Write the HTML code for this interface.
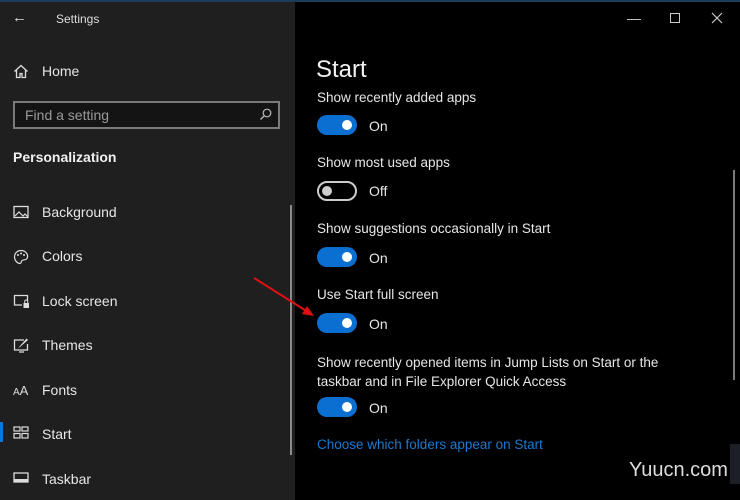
<!DOCTYPE html>
<html><head><meta charset="utf-8"><style>
*{margin:0;padding:0;box-sizing:border-box}
body{width:740px;height:500px;overflow:hidden;background:#000;font-family:"Liberation Sans",sans-serif;position:relative;color:#fff}
.side{position:absolute;left:0;top:0;width:295px;height:500px;background:#1f1f1f}
.topline{position:absolute;left:0;top:0;width:740px;height:2px;background:#1d3b5a}
.t{position:absolute;white-space:nowrap}
.nav{position:absolute;left:42px;font-size:14px;color:#e6e6e6}
.ic{position:absolute;left:13px}
.sw{position:absolute;left:317px;width:40px;height:20px;border-radius:10px;background:#0a6fd0}
.sw::after{content:"";position:absolute;right:5px;top:5px;width:10px;height:10px;border-radius:50%;background:#fff}
.off{background:transparent;border:2px solid #ccc}
.off::after{left:3px;top:3px;right:auto;background:#ccc}
.lbl{position:absolute;left:317px;font-size:13.5px;color:#e6e6e6}
.st{position:absolute;left:369px;font-size:14px;color:#e6e6e6}
</style></head><body>
<div class="side"></div>
<div class="topline"></div>
<div class="t" style="left:12px;top:9px;font-size:15px;color:#ddd">&#8592;</div>
<div class="t" style="left:56px;top:12px;font-size:12px;color:#ddd">Settings</div>
<svg class="ic" style="top:64px" width="16" height="15" viewBox="0 0 16 15"><path d="M1.5 7.5L8 1.5l6.5 6M3.5 6v7.5h3.5v-4h2v4h3.5V6" fill="none" stroke="#ddd" stroke-width="1.3"/></svg>
<div class="nav" style="top:63px">Home</div>
<div style="position:absolute;left:13px;top:101px;width:267px;height:28px;border:2px solid #7a7a7a;background:#141414"></div>
<div class="t" style="left:25px;top:107px;font-size:14px;color:#9a9a9a">Find a setting</div>
<svg style="position:absolute;left:259px;top:108px" width="13" height="13" viewBox="0 0 13 13"><circle cx="8" cy="5" r="3.8" fill="none" stroke="#bbb" stroke-width="1.2"/><path d="M5.3 7.7L1.5 11.5" stroke="#bbb" stroke-width="1.3"/></svg>
<div class="t" style="left:13px;top:149px;font-size:14px;font-weight:bold;color:#f0f0f0">Personalization</div>

<svg class="ic" style="top:205px" width="16" height="14" viewBox="0 0 16 14"><rect x="1" y="1.5" width="14" height="11" fill="none" stroke="#ddd" stroke-width="1.3"/><path d="M2 11l4-4 4 4 2-2 3 3" fill="none" stroke="#ddd" stroke-width="1.2"/></svg>
<div class="nav" style="top:204px">Background</div>
<svg class="ic" style="top:249px" width="16" height="16" viewBox="0 0 16 16"><path d="M8 1.5C4 1.5 1.5 4.5 1.5 8c0 3.5 3 6.5 5.5 6.5 1.5 0 1-2 2-3s3 0 4.5-1.5S15 7 14 5 11 1.5 8 1.5z" fill="none" stroke="#ddd" stroke-width="1.2"/><circle cx="5" cy="6" r="1" fill="#ddd"/><circle cx="8" cy="4.5" r="1" fill="#ddd"/><circle cx="11" cy="6" r="1" fill="#ddd"/></svg>
<div class="nav" style="top:248px">Colors</div>
<svg class="ic" style="top:294px" width="17" height="15" viewBox="0 0 17 15"><path d="M9 11H1.5V1.5h13V7" fill="none" stroke="#ddd" stroke-width="1.3"/><rect x="10.5" y="9" width="5.5" height="5" fill="#ddd"/><path d="M11.7 9V7.5a1.5 1.5 0 013 0V9" fill="none" stroke="#ddd"/></svg>
<div class="nav" style="top:293px">Lock screen</div>
<svg class="ic" style="top:338px" width="17" height="15" viewBox="0 0 17 15"><path d="M11 2H1.5v10h13V6M6 14h5" fill="none" stroke="#ddd" stroke-width="1.3"/><path d="M5 10l2-1 8-7-1.5-1.5-7 8z" fill="#ddd"/></svg>
<div class="nav" style="top:337px">Themes</div>
<div class="t" style="left:13px;top:383px;font-size:10px;color:#ddd">A<span style="font-size:13px">A</span></div>
<div class="nav" style="top:382px">Fonts</div>
<div style="position:absolute;left:0;top:422px;width:3px;height:20px;background:#0a78d7"></div>
<svg class="ic" style="top:426px" width="16" height="13" viewBox="0 0 16 13"><rect x="1" y="1" width="6" height="4" fill="none" stroke="#ddd" stroke-width="1.2"/><rect x="9" y="1" width="6" height="4" fill="none" stroke="#ddd" stroke-width="1.2"/><rect x="1" y="7.5" width="6" height="4.5" fill="none" stroke="#ddd" stroke-width="1.2"/><rect x="9" y="7.5" width="6" height="4.5" fill="none" stroke="#ddd" stroke-width="1.2"/></svg>
<div class="nav" style="top:426px">Start</div>
<svg class="ic" style="top:472px" width="16" height="11" viewBox="0 0 16 11"><rect x="1" y="1" width="14" height="9" fill="none" stroke="#ddd" stroke-width="1.3"/><rect x="1" y="7" width="14" height="3" fill="#ddd"/></svg>
<div class="nav" style="top:471px">Taskbar</div>
<div style="position:absolute;left:290px;top:205px;width:2px;height:250px;background:#8a8a8a"></div>

<div class="t" style="left:627px;top:10px;font-size:14px;color:#ccc">&#8212;</div>
<div style="position:absolute;left:670px;top:13px;width:10px;height:10px;border:1.3px solid #ccc"></div>
<svg style="position:absolute;left:711px;top:12px" width="12" height="12"><path d="M1 1l10 10M11 1L1 11" stroke="#ccc" stroke-width="1.2"/></svg>

<div class="t" style="left:316px;top:56px;font-size:24px;color:#f2f2f2">Start</div>
<div class="lbl" style="top:90px">Show recently added apps</div>
<div class="sw" style="top:115px"></div><div class="st" style="top:118px">On</div>
<div class="lbl" style="top:155px">Show most used apps</div>
<div class="sw off" style="top:181px"></div><div class="st" style="top:183px">Off</div>
<div class="lbl" style="top:221px">Show suggestions occasionally in Start</div>
<div class="sw" style="top:247px"></div><div class="st" style="top:250px">On</div>
<div class="lbl" style="top:287px">Use Start full screen</div>
<div class="sw" style="top:313px"></div><div class="st" style="top:316px">On</div>
<div class="lbl" style="top:353px;line-height:19px">Show recently opened items in Jump Lists on Start or the<br>taskbar and in File Explorer Quick Access</div>
<div class="sw" style="top:397px"></div><div class="st" style="top:400px">On</div>
<div class="lbl" style="top:437px;color:#1a7ad0">Choose which folders appear on Start</div>
<div style="position:absolute;left:733px;top:170px;width:2px;height:210px;background:#7a7a7a"></div>
<svg style="position:absolute;left:250px;top:275px" width="70" height="50"><path d="M4 3L58 37" stroke="#e01010" stroke-width="2"/><path d="M64 41l-12-2 5-8z" fill="#e01010"/></svg>
<div style="position:absolute;left:730px;top:444px;width:10px;height:40px;background:#1c2026"></div>
<div class="t" style="left:629px;top:459px;font-size:20px;color:#ddd">Yuucn.com</div>
</body></html>
